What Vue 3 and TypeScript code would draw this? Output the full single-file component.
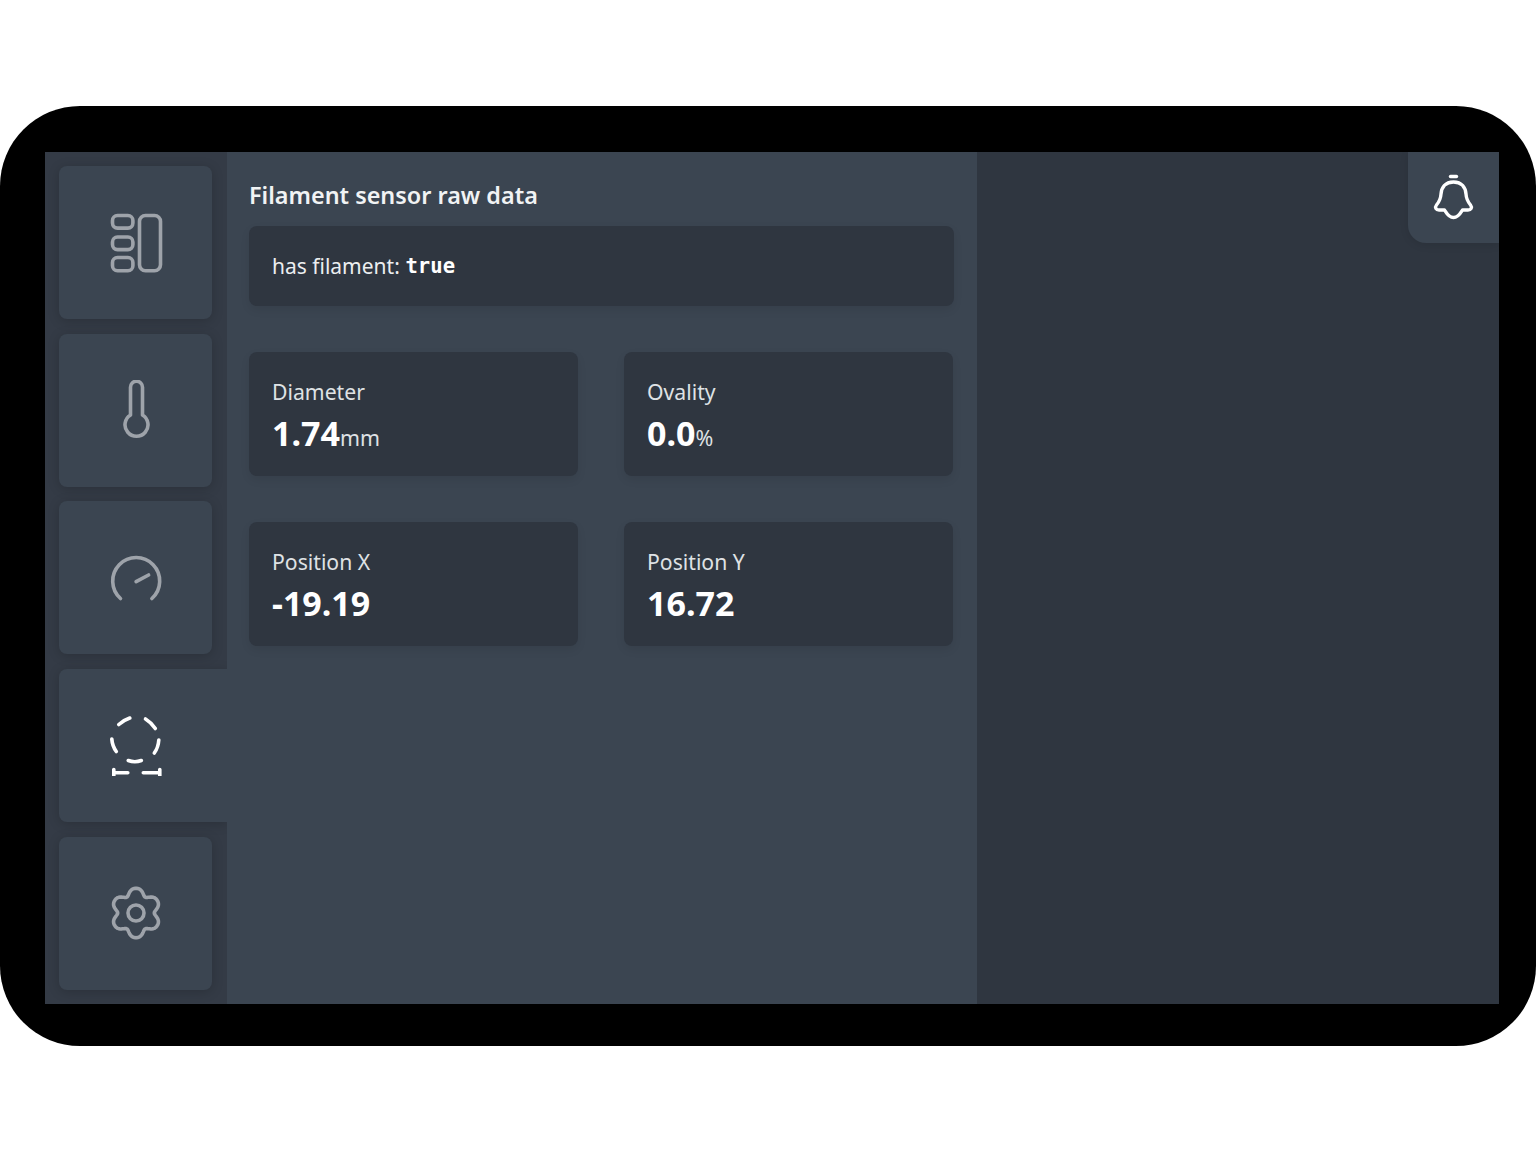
<script setup lang="ts">
import { computed } from 'vue'

interface Stat { label: string; value: string; unit?: string }
const stats: Stat[] = [
  { label: 'Diameter', value: '1.74', unit: 'mm' },
  { label: 'Ovality', value: '0.0', unit: '%' },
  { label: 'Position X', value: '-19.19' },
  { label: 'Position Y', value: '16.72' },
]

const gearPath = computed(() => {
  const cx = 135.5, cy = 913, pts: string[] = []
  for (let i = 0; i < 180; i++) {
    const t = (i / 180) * Math.PI * 2
    const r = 22 + 3.2 * Math.cos(6 * t) - 0.5 * Math.cos(12 * t)
    pts.push(`${(cx + r * Math.sin(t)).toFixed(2)} ${(cy - r * Math.cos(t)).toFixed(2)}`)
  }
  return 'M' + pts.join('L') + 'Z'
})
</script>

<template>
  <div class="device">
    <div class="screen">
      <nav class="sidebar">
        <button class="nav-btn">
          <svg class="icon" viewBox="105.5 212.5 60 60">
            <rect x="112" y="215" width="20.4" height="12.6" rx="5" />
            <rect x="112" y="236.5" width="20.4" height="12.6" rx="5" />
            <rect x="112" y="257" width="20.4" height="13.2" rx="5" />
            <rect x="139" y="215" width="21" height="55.2" rx="6" />
          </svg>
        </button>
        <button class="nav-btn">
          <svg class="icon" viewBox="105.5 380.5 60 60">
            <path d="M130 415.5V387.7a6 6 0 0 1 12 0V415.5a11.5 11.5 0 1 1-12 0z" />
          </svg>
        </button>
        <button class="nav-btn">
          <svg class="icon" viewBox="105.5 547.5 60 60">
            <path d="M120 598A23.5 23.5 0 1 1 151.4 598" />
            <path d="M135.6 581.2L148.1 574.5" />
          </svg>
        </button>
        <button class="nav-btn active">
          <svg class="icon" viewBox="105.5 715.5 60 60">
            <path d="M118.3 724Q123.3 719.5 129.3 717.5" />
            <path d="M145 718.5Q150.8 722 154.8 728" />
            <path d="M111.3 738.5Q111.8 745.5 115.8 751" />
            <path d="M158.3 739.5Q157.8 747 153.8 752.5" />
            <path d="M127.8 760Q134.3 762.5 140.8 760" />
            <path d="M113.3 772.3H127.3M113.3 769V776M142.8 772.3H159.3M159.3 769V776" />
          </svg>
        </button>
        <button class="nav-btn">
          <svg class="icon" viewBox="105.5 883 60 60">
            <path :d="gearPath" />
            <circle cx="135.5" cy="913" r="8" />
          </svg>
        </button>
      </nav>

      <main class="main">
        <h1 class="title">Filament sensor raw data</h1>
        <div class="card status">has filament: <code class="mono">true</code></div>
        <div class="grid">
          <div v-for="s in stats" :key="s.label" class="card stat">
            <div class="label">{{ s.label }}</div>
            <div class="value">{{ s.value }}<span v-if="s.unit" class="unit">{{ s.unit }}</span></div>
          </div>
        </div>
      </main>

      <aside class="right">
        <button class="bell">
          <svg class="bell-icon" viewBox="1430 170 48 52">
            <path d="M1450.5 176.5H1456.5" />
            <path d="M1453.5 182C1445 182 1441.5 188 1441 194C1440.7 199 1439 202 1436.5 205C1434.5 207.5 1436 210 1439 210H1444.5C1446 212 1448 217.5 1453.5 217.5C1459 217.5 1461 212 1462.5 210H1468C1471 210 1472.5 207.5 1470.5 205C1468 202 1466.3 199 1466 194C1465.5 188 1462 182 1453.5 182Z" />
          </svg>
        </button>
      </aside>
    </div>
  </div>
</template>

<style>
html, body { margin: 0; background: #fff; }
</style>

<style scoped>
.device {
  box-sizing: border-box;
  width: 1536px;
  height: 940px;
  margin-top: 106px;
  padding: 46px 37px 42px 45px;
  background: #000;
  border-radius: 80px;
  font-family: "Noto Sans", "Open Sans", sans-serif;
}
.screen {
  display: flex;
  height: 852px;
  background: #2f3640;
}
.sidebar {
  box-sizing: border-box;
  flex: 0 0 182px;
  display: flex;
  flex-direction: column;
  gap: 14.67px;
  padding: 14px 0 14.3px 14px;
  background: #343b46;
  overflow: hidden;
}
.nav-btn {
  flex: 1;
  display: flex;
  align-items: center;
  justify-content: center;
  margin-right: 15px;
  padding: 0;
  border: 0;
  border-radius: 8px;
  background: #3b4551;
  box-shadow: 0 2px 12px rgba(0, 0, 0, .18);
  color: #9ea3aa;
}
.nav-btn.active {
  margin-right: 0;
  padding-right: 15px;
  border-radius: 8px 0 0 8px;
  color: #fff;
}
.icon { width: 60px; height: 60px; }
.icon * { fill: none; stroke: currentColor; stroke-width: 3.6; stroke-linecap: round; stroke-linejoin: round; }
.main {
  box-sizing: border-box;
  flex: 0 0 750px;
  padding: 25px 23px 0 22px;
  background: #3b4551;
  color: #fff;
}
.title {
  margin: 0 0 13px;
  font-size: 23.4px;
  line-height: 36px;
  font-weight: 600;
  color: #f1f3f4;
}
.card {
  box-sizing: border-box;
  padding: 0 23px;
  background: #2f3640;
  border-radius: 8px;
  box-shadow: 0 4px 10px rgba(0, 0, 0, .08);
}
.status {
  display: flex;
  align-items: center;
  gap: .27em;
  height: 80px;
  margin-bottom: 46px;
  font-size: 21px;
  color: #eceef0;
}
.mono { font-family: "DejaVu Sans Mono", monospace; font-weight: 700; font-size: 20.6px; color: #fff; }
.grid {
  display: grid;
  grid-template-columns: 329px 329px;
  grid-auto-rows: 124px;
  gap: 46px;
}
.stat { padding-top: 23px; }
.label { font-size: 21.2px; line-height: 33px; color: #dfe2e5; }
.value { font-size: 34px; line-height: 50px; font-weight: 700; color: #fff; }
.unit { font-size: 21.4px; font-weight: 400; color: #dfe2e5; }
.right { position: relative; flex: 1; }
.bell {
  position: absolute;
  top: 0;
  right: 0;
  display: flex;
  align-items: center;
  justify-content: center;
  width: 91px;
  height: 91px;
  padding: 0;
  border: 0;
  border-radius: 0 0 0 18px;
  background: #3b4551;
  box-shadow: 0 2px 8px rgba(0, 0, 0, .1);
}
.bell-icon { width: 48px; height: 52px; margin-top: -3px; }
.bell-icon * { fill: none; stroke: #fff; stroke-width: 3.4; stroke-linecap: round; stroke-linejoin: round; }
</style>
